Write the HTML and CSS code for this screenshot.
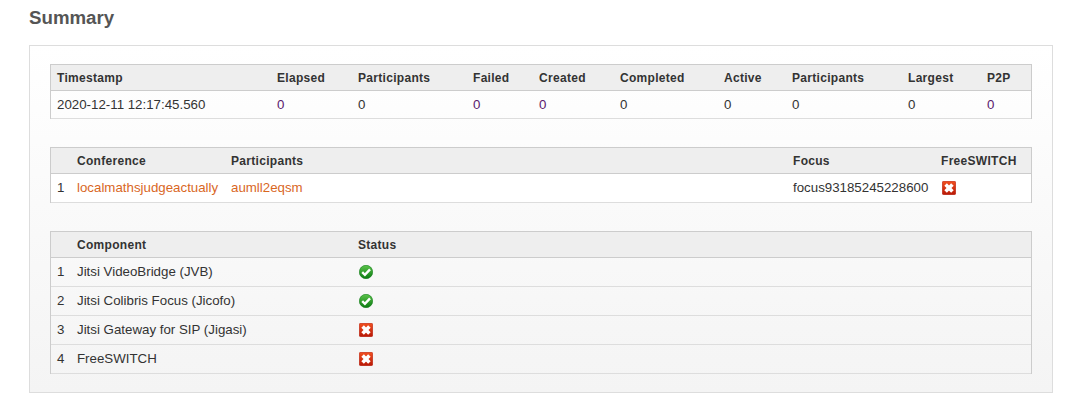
FILE: index.html
```html
<!DOCTYPE html>
<html lang="en">
<head>
<meta charset="utf-8">
<title>Summary</title>
<link rel="stylesheet" href="styles.css">
</head>
<body>
<svg class="defs" width="0" height="0" aria-hidden="true">
  <defs>
    <linearGradient id="g-ok" x1="0" y1="0" x2="0" y2="1"><stop offset="0" stop-color="#5cc44a"/><stop offset="1" stop-color="#0b7a12"/></linearGradient>
    <linearGradient id="g-no" x1="0" y1="0" x2="0" y2="1"><stop offset="0" stop-color="#f2501f"/><stop offset="1" stop-color="#b81806"/></linearGradient>
    <symbol id="ok" viewBox="0 0 14 14">
      <circle cx="7" cy="7" r="6.7" fill="url(#g-ok)" stroke="#0d7a14" stroke-width=".6"/>
      <path d="M3.2 7.2 5.9 9.8 11 4.4" fill="none" stroke="#fff" stroke-width="2.4"/>
    </symbol>
    <symbol id="no" viewBox="0 0 14 14">
      <rect x=".3" y=".3" width="13.4" height="13.4" rx="1.4" fill="url(#g-no)" stroke="#b51a08" stroke-width=".6"/>
      <path d="M3.6 3.6 10.4 10.4M10.4 3.6 3.6 10.4" fill="none" stroke="#fff" stroke-width="3.6"/>
    </symbol>
  </defs>
</svg>
<h2 class="title">Summary</h2>
<div class="panel">
  <table class="grid stats">
    <thead><tr><th>Timestamp</th><th>Elapsed</th><th>Participants</th><th>Failed</th><th>Created</th><th>Completed</th><th>Active</th><th>Participants</th><th>Largest</th><th>P2P</th></tr></thead>
    <tbody><tr><td>2020-12-11 12:17:45.560</td><td class="num">0</td><td class="zero">0</td><td class="num">0</td><td class="num">0</td><td class="zero">0</td><td class="zero">0</td><td class="zero">0</td><td class="zero">0</td><td class="num">0</td></tr></tbody>
  </table>
  <table class="grid confs">
    <thead><tr><th></th><th>Conference</th><th>Participants</th><th>Focus</th><th>FreeSWITCH</th></tr></thead>
    <tbody><tr class="white"><td>1</td><td><a href="#">localmathsjudgeactually</a></td><td><a href="#">aumll2eqsm</a></td><td>focus93185245228600</td><td><svg class="icon"><use href="#no"/></svg></td></tr></tbody>
  </table>
  <table class="grid comps">
    <thead><tr><th></th><th>Component</th><th>Status</th></tr></thead>
    <tbody>
      <tr><td>1</td><td>Jitsi VideoBridge (JVB)</td><td><svg class="icon"><use href="#ok"/></svg></td></tr>
      <tr><td>2</td><td>Jitsi Colibris Focus (Jicofo)</td><td><svg class="icon"><use href="#ok"/></svg></td></tr>
      <tr><td>3</td><td>Jitsi Gateway for SIP (Jigasi)</td><td><svg class="icon"><use href="#no"/></svg></td></tr>
      <tr><td>4</td><td>FreeSWITCH</td><td><svg class="icon"><use href="#no"/></svg></td></tr>
    </tbody>
  </table>
</div>
</body>
</html>
```

FILE: styles.css
```css
html, body { margin: 0; padding: 0; background: #fff; }
body {
  padding: 0 26px 0 29px;
  font-family: "Liberation Sans", Arial, sans-serif;
  font-size: 13.3px;
  color: #333;
}
.defs { position: absolute; }
.title {
  margin: 0;
  height: 45px;
  padding-top: 7px;
  box-sizing: border-box;
  font-size: 18.7px;
  line-height: 21px;
  font-weight: bold;
  color: #555;
}
.panel {
  border: 1px solid #ddd;
  padding: 18px 20px 18px 20px;
  height: 348px;
  box-sizing: border-box;
  background: linear-gradient(#fff, #f4f4f4);
}
.grid {
  width: 982px;
  table-layout: fixed;
  border-collapse: separate;
  border-spacing: 0;
  margin-bottom: 28px;
  border-left: 1px solid #ccc;
  border-right: 1px solid #ccc;
}
.grid:last-child { margin-bottom: 0; }
.grid th {
  height: 25px;
  padding: 0 0 0 6px;
  box-sizing: content-box;
  text-align: left;
  font-size: 12px;
  letter-spacing: .3px;
  background: #eee;
  color: #333;
  border-top: 1px solid #ccc;
  border-bottom: 1px solid #ccc;
  white-space: nowrap;
}
.grid td {
  height: 26px;
  padding: 0 0 2px 6px;
  border-bottom: 1px solid #ddd;
  white-space: nowrap;
}
.stats td { height: 27px; padding-bottom: 0; }
.white td { background: #fff; }
.num { color: #5a1a6e; }
.zero { color: #333; }
a { color: #d9671f; text-decoration: none; }
.icon { display: block; width: 14px; height: 14px; margin: 2px 0 0 1px; }

.stats th:nth-child(1) { width: 214px; }
.stats th:nth-child(2) { width: 75px; }
.stats th:nth-child(3) { width: 109px; }
.stats th:nth-child(4) { width: 60px; }
.stats th:nth-child(5) { width: 75px; }
.stats th:nth-child(6) { width: 98px; }
.stats th:nth-child(7) { width: 62px; }
.stats th:nth-child(8) { width: 110px; }
.stats th:nth-child(9) { width: 73px; }

.confs th:nth-child(1) { width: 14px; }
.confs th:nth-child(2) { width: 148px; }
.confs th:nth-child(3) { width: 556px; }
.confs th:nth-child(4) { width: 142px; }

.comps th:nth-child(1) { width: 14px; }
.comps th:nth-child(2) { width: 275px; }
```
